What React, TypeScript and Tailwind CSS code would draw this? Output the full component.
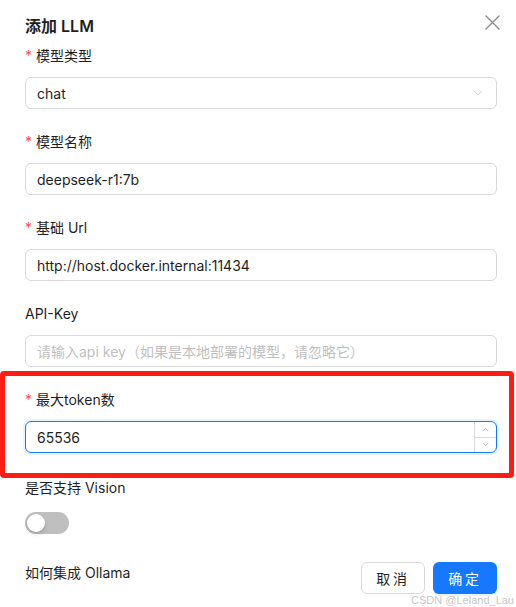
import { ChevronDown, ChevronUp } from "lucide-react";

const font = { fontFamily: 'Inter, "Noto Sans CJK SC", sans-serif' };

function Label({ text, required }: { text: string; required?: boolean }) {
  return (
    <div className="flex h-[22px] items-center text-[14px] leading-[22px] text-[#1f1f1f]">
      {required && <span className="mr-[4px] text-[14px] text-[#ff4d4f]">*</span>}
      {text}
    </div>
  );
}

function TextInput({ value, placeholder }: { value?: string; placeholder?: string }) {
  return (
    <div className="flex h-[32px] items-center rounded-[6px] border border-[#d9d9d9] bg-white px-[11px] text-[14px]">
      {value ? (
        <span className="text-[#1f1f1f]">{value}</span>
      ) : (
        <span className="text-[#bfbfbf]">{placeholder}</span>
      )}
    </div>
  );
}

export default function App() {
  return (
    <div className="relative h-[607px] w-[516px] overflow-hidden bg-white" style={font}>
      <div className="pl-[25px] pr-[19px] pt-[14px]">
        <div className="flex h-[24px] items-start justify-between">
          <h2 className="text-[16px] font-semibold leading-[24px] text-[#1f1f1f]">添加 LLM</h2>
          <svg className="mr-[-3px] mt-[1px]" width="15" height="15" viewBox="0 0 15 15">
            <path d="M1 1L14 14M14 1L1 14" stroke="#8c8c8c" strokeWidth="1.4" strokeLinecap="round" />
          </svg>
        </div>

        <div className="mt-[7px] flex flex-col">
          <div className="mb-[22px] flex flex-col gap-[10px]">
            <Label text="模型类型" required />
            <div className="flex h-[32px] items-center justify-between rounded-[6px] border border-[#d9d9d9] px-[11px] text-[14px] text-[#1f1f1f]">
              <span>chat</span>
              <ChevronDown className="h-[14px] w-[14px] text-[#bfbfbf]" strokeWidth={1.5} />
            </div>
          </div>

          <div className="mb-[22px] flex flex-col gap-[10px]">
            <Label text="模型名称" required />
            <TextInput value="deepseek-r1:7b" />
          </div>

          <div className="mb-[22px] flex flex-col gap-[10px]">
            <Label text="基础 Url" required />
            <TextInput value="http://host.docker.internal:11434" />
          </div>

          <div className="mb-[22px] flex flex-col gap-[10px]">
            <Label text="API-Key" />
            <TextInput placeholder="请输入api key（如果是本地部署的模型，请忽略它）" />
          </div>

          <div className="mb-[24px] flex flex-col gap-[10px]">
            <Label text="最大token数" required />
            <div className="flex h-[32px] items-stretch overflow-hidden rounded-[6px] border border-[#1677ff] shadow-[0_0_0_2px_rgba(5,145,255,0.1)]">
              <div className="flex flex-1 items-center px-[11px] text-[14px] text-[#1f1f1f]">65536</div>
              <div className="flex w-[22px] flex-col border-l border-[#d9d9d9]">
                <div className="flex flex-1 items-center justify-center border-b border-[#d9d9d9]">
                  <ChevronUp className="h-[9px] w-[9px] text-[#a6a6a6]" strokeWidth={2} />
                </div>
                <div className="flex flex-1 items-center justify-center">
                  <ChevronDown className="h-[9px] w-[9px] text-[#a6a6a6]" strokeWidth={2} />
                </div>
              </div>
            </div>
          </div>

          <div className="flex flex-col gap-[8px]">
            <Label text="是否支持 Vision" />
            <div className="flex h-[32px] items-center">
              <div className="flex h-[22px] w-[44px] items-center rounded-full bg-[#bfbfbf] px-[2px]">
                <div className="h-[18px] w-[18px] rounded-full bg-white shadow-[0_2px_4px_rgba(0,35,11,0.2)]" />
              </div>
            </div>
          </div>

          <div className="mt-[23px] flex items-start justify-between">
            <span className="text-[14px] leading-[22px] text-[#1f1f1f]">如何集成 Ollama</span>
            <div className="flex gap-[8px]">
              <button className="h-[32px] w-[64px] rounded-[6px] border border-[#d9d9d9] bg-white text-[14px] tracking-[0.2em] text-[#1f1f1f]">
                取消
              </button>
              <button className="h-[32px] w-[64px] rounded-[6px] bg-[#1677ff] text-[14px] tracking-[0.2em] text-white shadow-[0_2px_0_rgba(5,145,255,0.1)]">
                确定
              </button>
            </div>
          </div>
        </div>
      </div>

      <div className="pointer-events-none absolute left-0 top-[371px] h-[107px] w-[514px] rounded-[4px] border-[5px] border-[#fc1e14]" />
      <div className="pointer-events-none absolute right-[2px] top-[592px] text-[11px] text-[#c8c8c8]" style={{ fontFamily: '"Liberation Sans", sans-serif' }}>
        CSDN @Leland_Lau
      </div>
    </div>
  );
}
